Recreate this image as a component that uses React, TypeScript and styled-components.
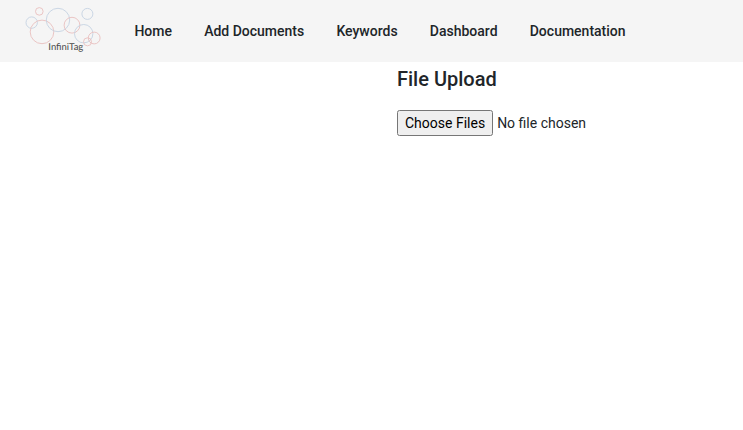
import React from 'react';
import styled, { createGlobalStyle } from 'styled-components';

const GlobalStyle = createGlobalStyle`
  *, *::before, *::after { box-sizing: border-box; }
  body { margin: 0; background: #fff; color: #212529; font-family: Roboto, sans-serif; font-size: 14px; line-height: 20px; }
`;

const Toolbar = styled.header`
  display: flex;
  align-items: center;
  height: 62px;
  padding-left: 24px;
  background: #f5f5f5;
`;

const Logo = styled.svg`
  width: 78px;
  height: 62px;
  flex: none;
`;

const Nav = styled.nav`
  display: flex;
  gap: 0.2px;
  padding-left: 16.4px;
`;

const NavLink = styled.a`
  padding: 0 16px;
  font-weight: 500;
  line-height: 36px;
  white-space: nowrap;
  color: #212529;
  text-decoration: none;
`;

const Content = styled.main`
  padding: 1px 0 0 397px;
`;

const Title = styled.h2`
  margin: 0 0 15px;
  font-size: 20px;
  font-weight: 500;
  line-height: 32px;
  color: #212529;
`;

const FileInput = styled.input`
  display: block;
  width: 300px;
  font-family: Roboto, sans-serif;
  font-size: 14px;
  line-height: 20px;
  color: #212529;

  &::file-selector-button {
    height: 26px;
    font: inherit;
  }
`;

const links = ['Home', 'Add Documents', 'Keywords', 'Dashboard', 'Documentation'];

const red = '#e9c0be';
const blue = '#c5d3e2';

const circles = [
  { x: 15.3, y: 11.4, r: 3.8, color: red },
  { x: 7.7, y: 22.6, r: 5.7, color: blue },
  { x: 18, y: 31.9, r: 11.8, color: red },
  { x: 34, y: 20, r: 11.7, color: blue },
  { x: 48, y: 25.2, r: 7.9, color: red },
  { x: 63.4, y: 13.9, r: 5.5, color: blue },
  { x: 59.7, y: 33.7, r: 9.2, color: blue },
  { x: 63.5, y: 41.8, r: 4, color: red },
  { x: 70.2, y: 38, r: 5.9, color: red },
];

export default function App() {
  return (
    <>
      <GlobalStyle />
      <Toolbar>
        <Logo viewBox="0 0 78 62" role="img" aria-label="InfiniTag">
          {circles.map((c) => (
            <circle key={`${c.x}-${c.y}`} cx={c.x} cy={c.y} r={c.r} fill="none" stroke={c.color} strokeWidth="0.9" />
          ))}
          <text x="24.3" y="50.4" fontFamily="Lato, sans-serif" fontSize="9.5" textLength="35" lengthAdjust="spacingAndGlyphs" textRendering="geometricPrecision" fill="#484848">InfiniTag</text>
        </Logo>
        <Nav>
          {links.map((label) => (
            <NavLink key={label} href="#">{label}</NavLink>
          ))}
        </Nav>
      </Toolbar>
      <Content>
        <Title>File Upload</Title>
        <FileInput type="file" multiple aria-label="File Upload" />
      </Content>
    </>
  );
}
